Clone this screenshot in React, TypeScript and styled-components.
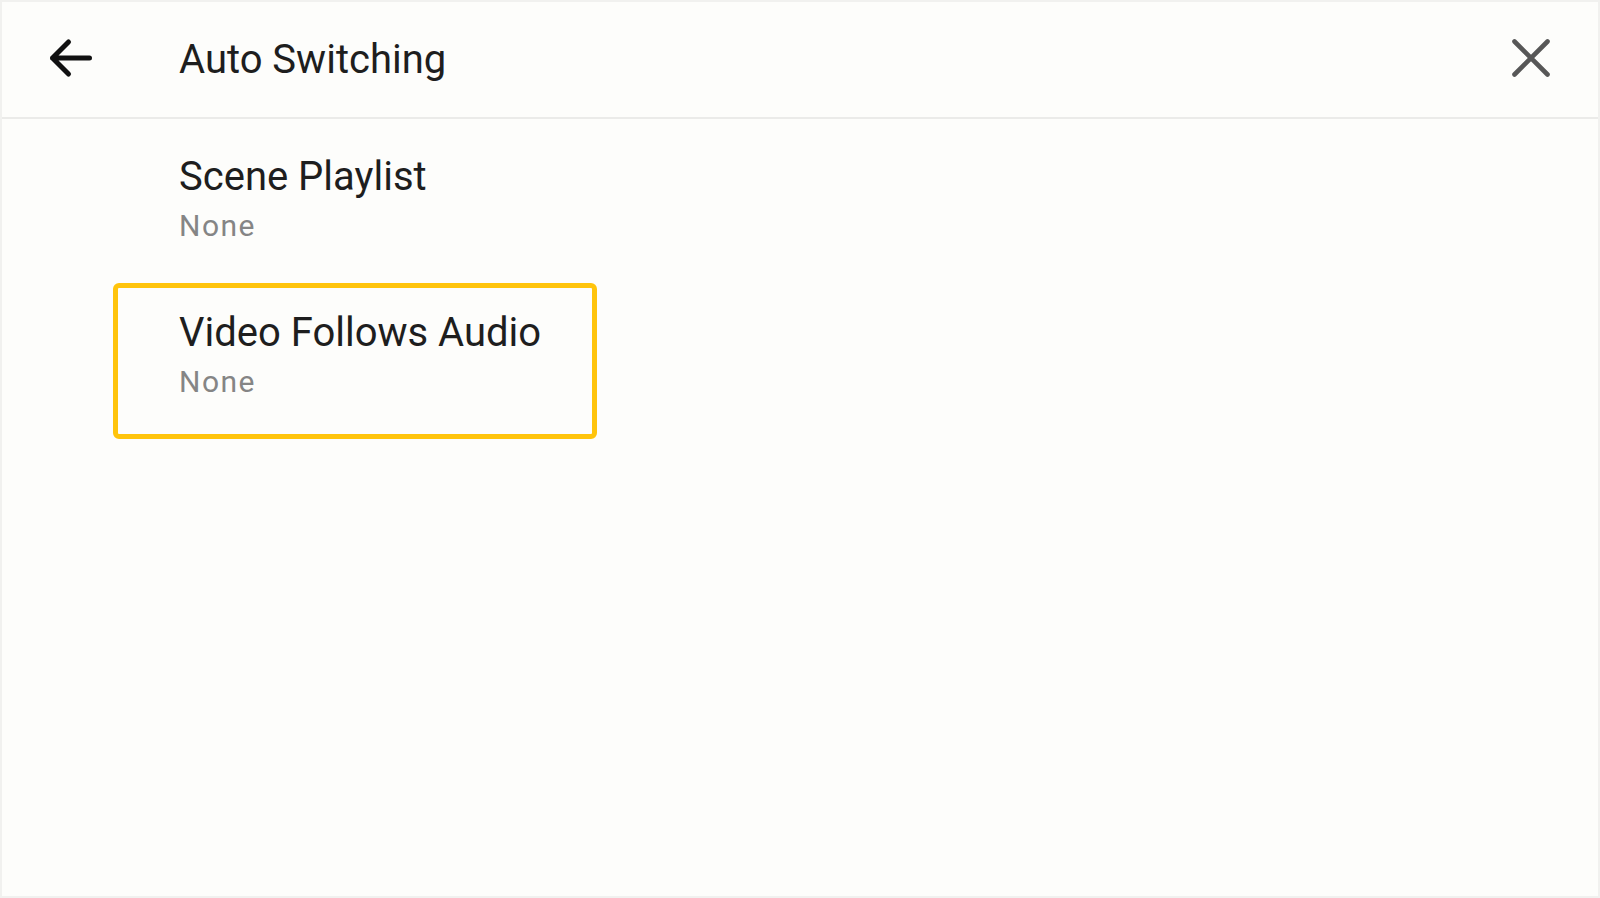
import React from "react";
import styled, { createGlobalStyle } from "styled-components";

const Global = createGlobalStyle`
  html, body { margin: 0; padding: 0; background: #fdfdfb; }
  body { font-family: Roboto, "Noto Sans", "Liberation Sans", sans-serif; }
  * { box-sizing: border-box; }
`;

const Screen = styled.div`
  width: 1600px;
  height: 898px;
  background: #fdfdfb;
  border: 2px solid #f1f1ef;
  display: flex;
  flex-direction: column;
  overflow: hidden;
`;

const Header = styled.header`
  height: 117px;
  flex: 0 0 auto;
  display: flex;
  align-items: center;
  border-bottom: 2px solid #ebebe9;
  padding: 0 39px 0 44px;
`;

const IconButton = styled.button`
  width: 56px;
  height: 56px;
  border: none;
  background: transparent;
  padding: 0;
  display: flex;
  align-items: center;
  justify-content: center;
  cursor: pointer;
`;

const Title = styled.h1`
  margin: 0 0 0 77px;
  font-size: 40px;
  line-height: 48px;
  font-weight: 400;
  color: #1e1e1e;
  flex: 1;
`;

const List = styled.div`
  display: flex;
  flex-direction: column;
  padding: 8px 0 0 111px;
`;

const Item = styled.div<{ $focused?: boolean }>`
  width: 484px;
  height: 156px;
  border: 5px solid ${(p) => (p.$focused ? "#ffc40c" : "transparent")};
  border-radius: 6px;
  padding: 21px 0 0 61px;
  display: flex;
  flex-direction: column;
`;

const ItemTitle = styled.div`
  font-size: 40px;
  line-height: 48px;
  color: #1e1e1e;
  white-space: nowrap;
`;

const ItemValue = styled.div`
  font-size: 30px;
  line-height: 36px;
  letter-spacing: 1.5px;
  margin-top: 7px;
  color: #858585;
`;

const BackIcon = () => (
  <svg width="56" height="56" viewBox="0 0 56 56" fill="none">
    <path
      d="M6.5 26H43.5M6.5 26L22.5 10M6.5 26L22.5 42"
      stroke="#111"
      strokeWidth="5"
      strokeLinecap="round"
      strokeLinejoin="round"
    />
  </svg>
);

const CloseIcon = () => (
  <svg width="56" height="56" viewBox="0 0 56 56" fill="none">
    <path
      d="M11.5 9.5L44.5 42.5M44.5 9.5L11.5 42.5"
      stroke="#575757"
      strokeWidth="4.6"
      strokeLinecap="round"
    />
  </svg>
);

export default function App() {
  return (
    <>
      <Global />
      <Screen>
        <Header>
          <IconButton aria-label="Back">
            <BackIcon />
          </IconButton>
          <Title>Auto Switching</Title>
          <IconButton aria-label="Close">
            <CloseIcon />
          </IconButton>
        </Header>
        <List>
          <Item>
            <ItemTitle>Scene Playlist</ItemTitle>
            <ItemValue>None</ItemValue>
          </Item>
          <Item $focused>
            <ItemTitle>Video Follows Audio</ItemTitle>
            <ItemValue>None</ItemValue>
          </Item>
        </List>
      </Screen>
    </>
  );
}
